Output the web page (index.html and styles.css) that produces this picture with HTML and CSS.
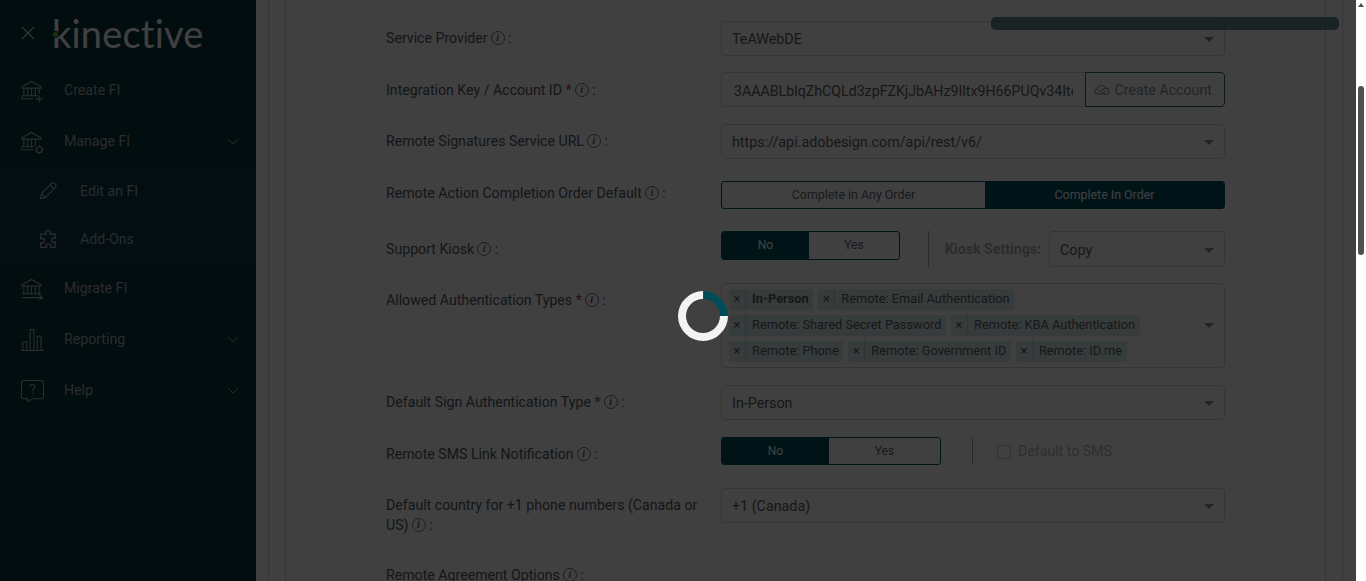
FILE: index.html
```html
<!DOCTYPE html>
<html lang="en">
<head>
    <meta charset="UTF-8">
    <meta name="viewport" content="width=device-width, initial-scale=1.0">
    <title>Edit an FI - Kinective</title>
    <link rel="stylesheet" href="styles.css">
</head>
<body>
<div class="app">
    <aside class="sidebar">
        <div class="brand">
            <svg class="close-icon" viewBox="0 0 14 14"><path d="M1 1l12 12M13 1L1 13"/></svg>
            <div class="logo">kinective<span class="logo-dot"></span></div>
        </div>
        <nav class="menu">
            <a class="menu-item">
                <svg class="menu-icon" viewBox="0 0 24 24"><path d="M1 7.500L11 2l10 5.500V9H1zM3 9v8M7 9v8M11 9v8M15 9v8M19 9v6M1 17h17M1 17v3h11M19 24v-7M15.500 20.500h7"/></svg>
                <span>Create FI</span>
            </a>
            <a class="menu-item">
                <svg class="menu-icon" viewBox="0 0 24 24"><path d="M1 7.500L11 2l10 5.500V9H1zM3 9v8M7 9v8M11 9v8M15 9v7M1 17h13M1 17v3h12"/><circle cx="19" cy="20" r="3"/><path d="M19 15.500V17M19 23v1.500M14.500 20H16M22 20h1.500M16 17l1 1M21 22l1 1M22 17l-1 1M17 22l-1 1"/></svg>
                <span>Manage FI</span>
                <svg class="chevron" viewBox="0 0 12 7"><path d="M1 1l5 5 5-5"/></svg>
            </a>
            <div class="submenu">
                <a class="menu-item sub-item">
                    <svg class="menu-icon sub-icon" viewBox="0 0 18 18"><path d="M1.500 16.500l1-5L12.500 1.500c1-.8 2-.8 3 0l1 1c.8 1 .8 2 0 3l-10 10zM2.500 11.500l4 4M11 3l4 4"/></svg>
                    <span>Edit an FI</span>
                </a>
                <a class="menu-item sub-item">
                    <svg class="menu-icon sub-icon" viewBox="2.500 1.500 13 15"><path d="M7 3.500C7 1.500 11 1.500 11 3.500c0 .8-.5 1-.5 1.500H15v3.500c-.5 0-1-.5-1.500-.5-2 0-2 4 0 4 .5 0 1-.5 1.500-.5V16h-4c0-.5.5-1 .5-1.500 0-2-4-2-4 0 0 .5.5 1 .5 1.500H3v-4c.5 0 1 .5 1.500.5 2 0 2-4 0-4C4 8.500 3.500 9 3 9V5h4.500C7.500 4.500 7 4.300 7 3.500z"/></svg>
                    <span>Add-Ons</span>
                </a>
            </div>
            <a class="menu-item">
                <svg class="menu-icon" viewBox="0 0 24 24"><path d="M1 7.500L11 2l10 5.500V9H1zM3 9v8M7 9v8M11 9v8M15 9v8M19 9v8M1 17h20M1 21h21M19 18.500L22.500 21 19 23.500"/></svg>
                <span>Migrate FI</span>
            </a>
            <a class="menu-item">
                <svg class="menu-icon" viewBox="0 0 24 24"><path d="M2 23V14h4v9M9.500 23V1h4v22M17 23V8h4v15M0 23h24"/></svg>
                <span>Reporting</span>
                <svg class="chevron" viewBox="0 0 12 7"><path d="M1 1l5 5 5-5"/></svg>
            </a>
            <a class="menu-item">
                <svg class="menu-icon" viewBox="0 0 24 24"><path d="M3 1h18a2.500 2.500 0 0 1 2.500 2.500v14A2.500 2.500 0 0 1 21 20h-9l-5 3v-3H3A2.500 2.500 0 0 1 .5 17.500v-14A2.500 2.500 0 0 1 3 1z"/><path d="M9.500 7.500c0-3 5-3 5 0 0 2-2.500 2-2.500 4.500M12 14v1.500"/></svg>
                <span>Help</span>
                <svg class="chevron" viewBox="0 0 12 7"><path d="M1 1l5 5 5-5"/></svg>
            </a>
        </nav>
    </aside>

    <main class="content">
        <div class="progress-pill"></div>
        <div class="outer-card">
            <div class="inner-card">
                <form class="settings-form">
                    <div class="form-row">
                        <label class="field-label">Service Provider<span class="info">i</span> :</label>
                        <div class="select-box"><span>TeAWebDE</span><span class="caret"></span></div>
                    </div>
                    <div class="form-row">
                        <label class="field-label">Integration Key / Account ID <em class="req">*</em><span class="info">i</span> :</label>
                        <div class="input-group">
                            <input class="key-input" type="text" value="3AAABLblqZhCQLd3zpFZKjJbAHz9Iltx9H66PUQv34Ite8nXqLw0" readonly>
                            <button type="button" class="create-btn">
                                <svg class="cloud-icon" viewBox="0 0 18 12"><path d="M4.500 11C2.500 11 1 9.800 1 8.200 1 6.800 2 5.800 3.500 5.600 4 3 6 1.500 8.500 1.500c2 0 3.500 1 4.200 2.700 2.300 0 4.300 1.500 4.300 3.700 0 1.800-1.500 3.100-3.500 3.100zM5 8.500l8-4M7 11l6-3"/></svg>
                                Create Account
                            </button>
                        </div>
                    </div>
                    <div class="form-row">
                        <label class="field-label">Remote Signatures Service URL<span class="info">i</span> :</label>
                        <div class="select-box"><span>https://api.adobesign.com/api/rest/v6/</span><span class="caret"></span></div>
                    </div>
                    <div class="form-row row-order">
                        <label class="field-label">Remote Action Completion Order Default<span class="info">i</span> :</label>
                        <div class="toggle toggle-order">
                            <span class="toggle-opt opt-any">Complete in Any Order</span>
                            <span class="toggle-opt active">Complete In Order</span>
                        </div>
                    </div>
                    <div class="form-row row-kiosk">
                        <label class="field-label">Support Kiosk<span class="info">i</span> :</label>
                        <div class="inline-controls">
                            <div class="toggle toggle-kiosk">
                                <span class="toggle-opt active">No</span>
                                <span class="toggle-opt">Yes</span>
                            </div>
                            <div class="divider"></div>
                            <span class="kiosk-label">Kiosk Settings:</span>
                            <div class="select-box kiosk-select"><span>Copy</span><span class="caret"></span></div>
                        </div>
                    </div>
                    <div class="form-row row-tags">
                        <label class="field-label">Allowed Authentication Types <em class="req">*</em><span class="info">i</span> :</label>
                        <div class="tags-box">
                            <div class="tags">
                                <span class="tag"><i>×</i><b>In-Person</b></span>
                                <span class="tag"><i>×</i>Remote: Email Authentication</span>
                                <span class="tag"><i>×</i>Remote: Shared Secret Password</span>
                                <span class="tag"><i>×</i>Remote: KBA Authentication</span>
                                <span class="tag"><i>×</i>Remote: Phone</span>
                                <span class="tag"><i>×</i>Remote: Government ID</span>
                                <span class="tag"><i>×</i>Remote: ID.me</span>
                            </div>
                            <span class="caret"></span>
                        </div>
                    </div>
                    <div class="form-row row-sign">
                        <label class="field-label">Default Sign Authentication Type <em class="req">*</em><span class="info">i</span> :</label>
                        <div class="select-box"><span>In-Person</span><span class="caret"></span></div>
                    </div>
                    <div class="form-row row-sms">
                        <label class="field-label">Remote SMS Link Notification<span class="info">i</span> :</label>
                        <div class="inline-controls">
                            <div class="toggle toggle-sms">
                                <span class="toggle-opt active">No</span>
                                <span class="toggle-opt">Yes</span>
                            </div>
                            <div class="divider divider-sms"></div>
                            <span class="check-disabled"><span class="checkbox"></span>Default to SMS</span>
                        </div>
                    </div>
                    <div class="form-row">
                        <label class="field-label"><span>Default country for +1 phone numbers (Canada or</span> <span>US)</span><span class="info">i</span><span> :</span></label>
                        <div class="select-box"><span>+1 (Canada)</span><span class="caret"></span></div>
                    </div>
                    <div class="form-row row-last">
                        <label class="field-label">Remote Agreement Options<span class="info">i</span> :</label>
                    </div>
                </form>
            </div>
        </div>
    </main>

    <div class="scrollbar">
        <span class="scroll-up"></span>
        <span class="scroll-thumb"></span>
    </div>

    <div class="loading-overlay">
        <div class="spinner"></div>
    </div>
</div>
</body>
</html>
```

FILE: styles.css
```css
* {
    margin: 0;
    padding: 0;
    box-sizing: border-box;
    font-family: 'Roboto', sans-serif;
}
html, body {
    height: 100%;
    overflow: hidden;
}
body {
    font-size: 14.150px;
    line-height: 21px;
    color: #505864;
    background-color: white;
}
.app {
    position: relative;
    display: flex;
    height: 100vh;
    overflow: hidden;
}

/* sidebar */
.sidebar {
    width: 256px;
    flex-shrink: 0;
    background-color: #083440;
    color: #a8acae;
}
.brand {
    display: flex;
    align-items: center;
    height: 65px;
    padding-left: 21px;
}
.close-icon {
    width: 14px;
    height: 14px;
    margin-right: 18px;
    fill: none;
    stroke: #d0d0d0;
    stroke-width: 1.2;
}
.logo {
    position: relative;
    margin-left: -1px;
    font-family: 'Lato', sans-serif;
    font-size: 38px;
    font-weight: 400;
    line-height: 40px;
    color: white;
    letter-spacing: 0.2px;
}
.logo-dot {
    position: absolute;
    left: 1px;
    top: 19px;
    width: 5px;
    height: 5px;
    border-radius: 50%;
    background-color: #6fc23f;
    box-shadow: 0 0 0 1px #083440;
}
.menu-item {
    display: flex;
    align-items: center;
    height: 51px;
    padding: 0 17px 0 21px;
}
.menu-icon {
    width: 23px;
    height: 24px;
    margin-right: 20px;
    flex-shrink: 0;
    fill: none;
    stroke: #aeb2b4;
    stroke-width: 1.1;
}
.chevron {
    width: 12px;
    height: 7px;
    margin-left: auto;
    fill: none;
    stroke: #a0a4a6;
    stroke-width: 1;
}
.submenu {
    background-color: #0b3a46;
}
.sub-item {
    height: 48px;
    padding-left: 39px;
}
.sub-icon {
    width: 18px;
    height: 18px;
    margin-right: 23px;
}

/* main area */
.content {
    position: relative;
    flex: 1;
    min-width: 0;
    padding: 0 13px 0 12px;
}
.outer-card {
    border-left: 1px solid #d4d4d4;
    border-right: 1px solid #d4d4d4;
    height: 100%;
    padding: 0 16px;
}
.inner-card {
    border-left: 1px solid #d4d4d4;
    border-right: 1px solid #d4d4d4;
    height: 100%;
}
.settings-form {
    padding: 20.500px 0 0 100px;
}
.form-row {
    display: grid;
    grid-template-columns: 335px 504px;
    margin-bottom: 16.200px;
}
.row-order {
    height: 40px;
}
.row-kiosk {
    margin-bottom: 15.400px;
}
.row-tags {
    min-height: 85.600px;
}
.row-sign {
    margin-bottom: 17px;
}
.row-sms {
    height: 34.600px;
}
.row-last {
    margin-top: 22px;
}
.field-label {
    padding: 7.500px 20px 0 0;
    line-height: 20px;
}
.req {
    color: #a04848;
    font-style: normal;
}
.info {
    display: inline-flex;
    align-items: center;
    justify-content: center;
    width: 14px;
    height: 14px;
    margin-left: 3px;
    border: 1px solid #6a7280;
    border-radius: 50%;
    font-family: 'Liberation Serif', serif;
    font-size: 10px;
    font-style: italic;
    font-weight: bold;
    line-height: 1;
    vertical-align: 2px;
}
.select-box {
    display: flex;
    align-items: center;
    justify-content: space-between;
    height: 35.400px;
    padding: 2px 10px 0 10px;
    border: 1px solid #ced4da;
    border-radius: 4px;
    font-size: 14.300px;
    color: #5e5e5e;
}
.caret {
    width: 0;
    height: 0;
    border-left: 5px solid transparent;
    border-right: 5px solid transparent;
    border-top: 5px solid #888;
    flex-shrink: 0;
}
.input-group {
    display: flex;
    height: 35.400px;
}
.key-input {
    width: 364px;
    height: 100%;
    padding: 2px 12px 0 12px;
    border: 1px solid #ced4da;
    border-right: none;
    border-radius: 4px 0 0 4px;
    outline: none;
    font-size: 14.200px;
    color: #5e5e5e;
    background-color: white;
}
.create-btn {
    flex: 1;
    padding-right: 4px;
    border: 1px solid #2a6672;
    border-radius: 0 4px 4px 0;
    background-color: white;
    font-size: 14.200px;
    color: #8b9096;
}
.cloud-icon {
    width: 16px;
    height: 11px;
    margin-right: 1px;
    fill: none;
    stroke: #8b9096;
    stroke-width: 1.2;
}
.toggle {
    display: flex;
    height: 28.500px;
    border: 1px solid #00505c;
    border-radius: 3px;
    overflow: hidden;
    font-size: 12px;
    color: #5e6a74;
}
.toggle-opt {
    display: flex;
    align-items: center;
    justify-content: center;
    flex: 1;
}
.toggle-opt.active {
    background-color: #00505c;
    color: white;
}
.toggle-order {
    margin-top: 5.500px;
    font-size: 12.400px;
}
.toggle-order .toggle-opt {
    padding-bottom: 1px;
}
.opt-any {
    flex: none;
    width: 263px;
}
.toggle-kiosk {
    width: 179px;
}
.toggle-kiosk .toggle-opt.active {
    flex: none;
    width: 87px;
}
.toggle-sms {
    width: 220px;
}
.toggle-sms .toggle-opt.active {
    flex: none;
    width: 107px;
}
.inline-controls {
    display: flex;
    align-items: flex-start;
}
.divider {
    width: 1px;
    height: 36px;
    margin: 0 16px 0 28px;
    background-color: #9aa2a8;
}
.divider-sms {
    height: 28px;
    margin: 0 24px 0 31px;
}
.kiosk-label {
    align-self: center;
    margin-right: 8px;
    font-weight: bold;
    color: #b0b0b0;
}
.kiosk-select {
    flex: 1;
}
.check-disabled {
    display: flex;
    align-items: center;
    height: 30px;
    color: #b8b8b8;
}
.checkbox {
    width: 14px;
    height: 14px;
    margin-right: 7px;
    border: 1px solid #c8c8c8;
    border-radius: 3px;
}
.tags-box {
    display: flex;
    align-items: center;
    justify-content: space-between;
    height: 85px;
    padding: 5px 10px 5px 7px;
    border: 1px solid #ced4da;
    border-radius: 4px;
}
.tags {
    display: flex;
    flex-wrap: wrap;
    gap: 5px;
    width: 460px;
}
.tag {
    display: flex;
    align-items: center;
    height: 21px;
    padding-right: 4.600px;
    padding-bottom: 1px;
    border-radius: 2px;
    background-color: #d8efef;
    font-size: 12.800px;
    color: #5e5e5e;
    white-space: nowrap;
}
.tag i {
    width: 17px;
    height: 21px;
    margin-right: 6px;
    border-right: 1px solid #c0d0d0;
    font-style: normal;
    text-align: center;
}
.tag b {
    font-weight: bold;
}
.progress-pill {
    position: absolute;
    left: 735px;
    top: 17px;
    width: 348px;
    height: 13px;
    border-radius: 5px;
    background-color: rgba(8, 70, 80, 0.62);
}

/* browser scrollbar */
.scrollbar {
    position: relative;
    width: 10px;
    flex-shrink: 0;
    background-color: white;
}
.scroll-up {
    position: absolute;
    left: 2px;
    top: 3px;
    border-left: 3px solid transparent;
    border-right: 3px solid transparent;
    border-bottom: 4px solid #505050;
}
.scroll-thumb {
    position: absolute;
    left: 2px;
    top: 86px;
    width: 6px;
    height: 169px;
    border-radius: 3px;
    background-color: #505050;
}

/* loading overlay */
.loading-overlay {
    position: absolute;
    top: 0;
    left: 0;
    right: 10px;
    bottom: 0;
    background-color: rgba(0, 0, 0, 0.75);
}
.spinner {
    position: absolute;
    left: 678px;
    top: 291px;
    width: 50px;
    height: 50px;
    border: 8px solid #f3f3f3;
    border-top-color: #004d59;
    border-radius: 50%;
    transform: rotate(45deg);
}
```
